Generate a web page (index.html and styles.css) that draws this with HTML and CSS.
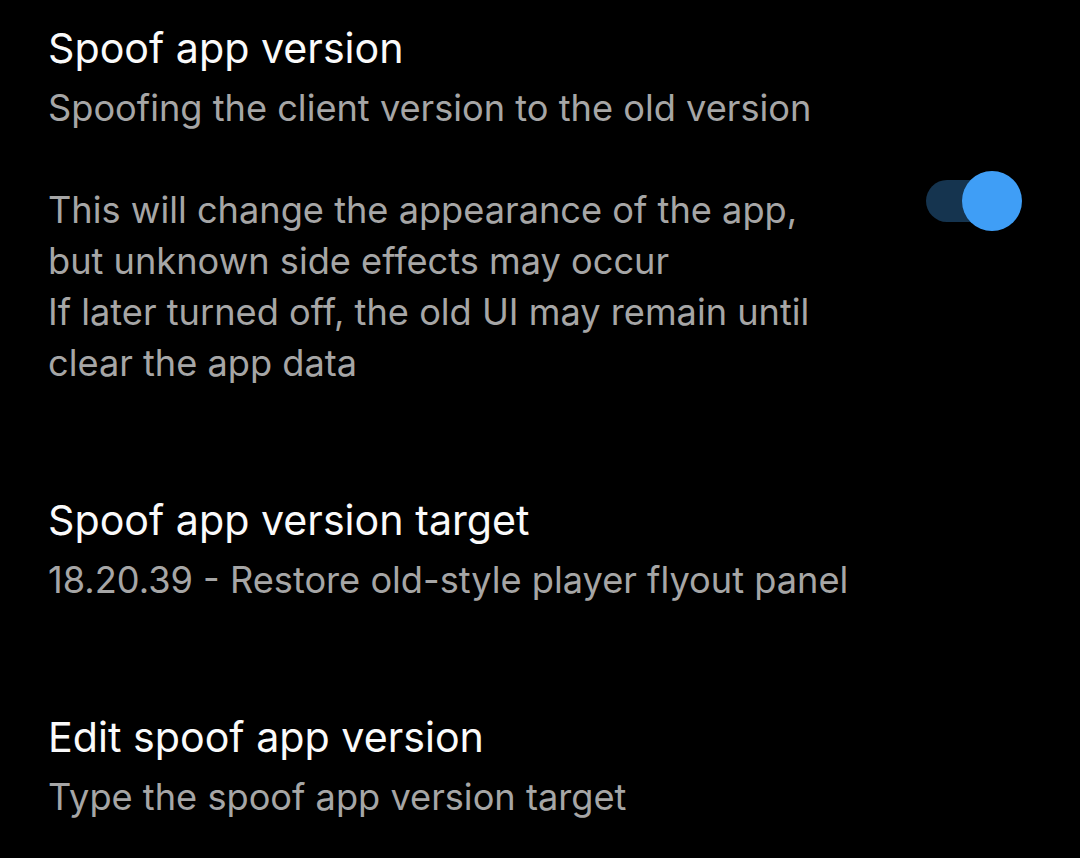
FILE: index.html
```html
<!DOCTYPE html>
<html lang="en">
<head>
<meta charset="utf-8">
<title>Spoof app version</title>
<link rel="stylesheet" href="styles.css">
</head>
<body>
<div class="list">
  <div class="pref pref-first">
    <div class="pref-text">
      <div class="pref-title">Spoof app version</div>
      <div class="pref-summary">Spoofing the client version to the old version<br><br>This will change the appearance of the app,<br>but unknown side effects may occur<br>If later turned off, the old UI may remain until<br>clear the app data</div>
    </div>
    <div class="switch">
      <div class="switch-track"></div>
      <div class="switch-thumb"></div>
    </div>
  </div>
  <div class="pref">
    <div class="pref-text">
      <div class="pref-title">Spoof app version target</div>
      <div class="pref-summary">18.20.39 - Restore old-style player flyout panel</div>
    </div>
  </div>
  <div class="pref">
    <div class="pref-text">
      <div class="pref-title">Edit spoof app version</div>
      <div class="pref-summary">Type the spoof app version target</div>
    </div>
  </div>
</div>
</body>
</html>
```
FILE: styles.css
```css
html, body {
  margin: 0;
  padding: 0;
  background: #000;
}
body {
  width: 1080px;
  height: 858px;
  overflow: hidden;
  font-family: Inter, "Liberation Sans", sans-serif;
}
.list {
  display: flex;
  flex-direction: column;
}
.pref {
  display: flex;
  align-items: center;
  padding: 51.5px 58px 51.5px 48px;
}
.pref-first {
  padding-top: 20px;
}
.pref-text {
  flex: 1;
  display: flex;
  flex-direction: column;
  gap: 7px;
}
.pref-title {
  color: #fafafa;
  font-size: 41.2px;
  line-height: 56px;
}
.pref-summary {
  color: #a6a6a6;
  font-size: 36.2px;
  line-height: 51px;
}
.switch {
  position: relative;
  width: 96px;
  height: 60px;
  flex: none;
  margin-bottom: 8px;
}
.switch-track {
  position: absolute;
  left: 0;
  top: 9px;
  width: 87px;
  height: 42px;
  border-radius: 21px;
  background: #15344f;
}
.switch-thumb {
  position: absolute;
  right: 0;
  top: 0;
  width: 60px;
  height: 60px;
  border-radius: 50%;
  background: #3f9ef6;
}
```
